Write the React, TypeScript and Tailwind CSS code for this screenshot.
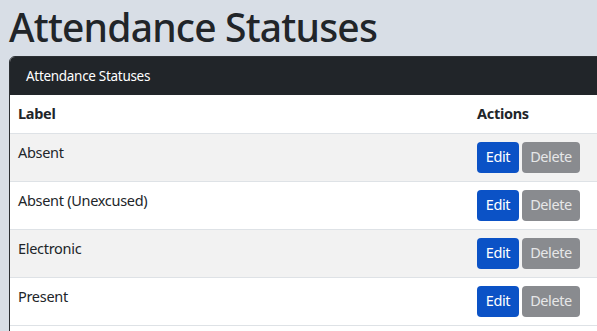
import React from "react";

const rows = ["Absent", "Absent (Unexcused)", "Electronic", "Present"];

export default function App() {
  return (
    <div
      className="w-[597px] h-[331px] overflow-hidden bg-[#d8dee6] text-[#212529]"
      style={{ fontFamily: '"Noto Sans", "Open Sans", sans-serif' }}
    >
      <h1 className="pl-[9px] pt-[2px] h-[56px] text-[39px] font-medium leading-[50px] tracking-[-0.8px] text-[#212529] whitespace-nowrap">
        Attendance Statuses
      </h1>
      <div className="ml-[9px] w-[620px] border border-[#2b2f33] rounded-tl-[6px] overflow-hidden bg-white pb-[20px]">
        <div className="h-[38px] bg-[#212529] pl-[16px] flex items-center text-white text-[13.5px] tracking-[-0.3px]">
          Attendance Statuses
        </div>
        <table className="w-full border-collapse text-[14.5px] tracking-[-0.3px]">
          <thead>
            <tr className="border-b border-[#dee2e6] h-[38px]">
              <th className="text-left font-bold px-[8px] align-middle">Label</th>
              <th className="text-left font-bold px-[8px] w-[159px] align-middle">Actions</th>
            </tr>
          </thead>
          <tbody>
            {rows.map((r, i) => (
              <tr
                key={r}
                className={`border-b border-[#dee2e6] ${i % 2 === 0 ? "bg-[#f2f2f2]" : "bg-white"}`}
              >
                <td className="px-[8px] pt-[6px] pb-[8px] align-top leading-[24px]">{r}</td>
                <td className="px-[8px] py-[8px] align-top">
                  <div className="flex gap-[3px]">
                    <button className="h-[31px] w-[42px] rounded-[4px] bg-[#0b52c6] text-white text-[14.5px] tracking-[-0.4px]">
                      Edit
                    </button>
                    <button className="h-[31px] w-[58px] rounded-[4px] bg-[#898b8f] text-[#e6e7e8] text-[14.5px] tracking-[-0.4px]">
                      Delete
                    </button>
                  </div>
                </td>
              </tr>
            ))}
          </tbody>
        </table>
      </div>
    </div>
  );
}
